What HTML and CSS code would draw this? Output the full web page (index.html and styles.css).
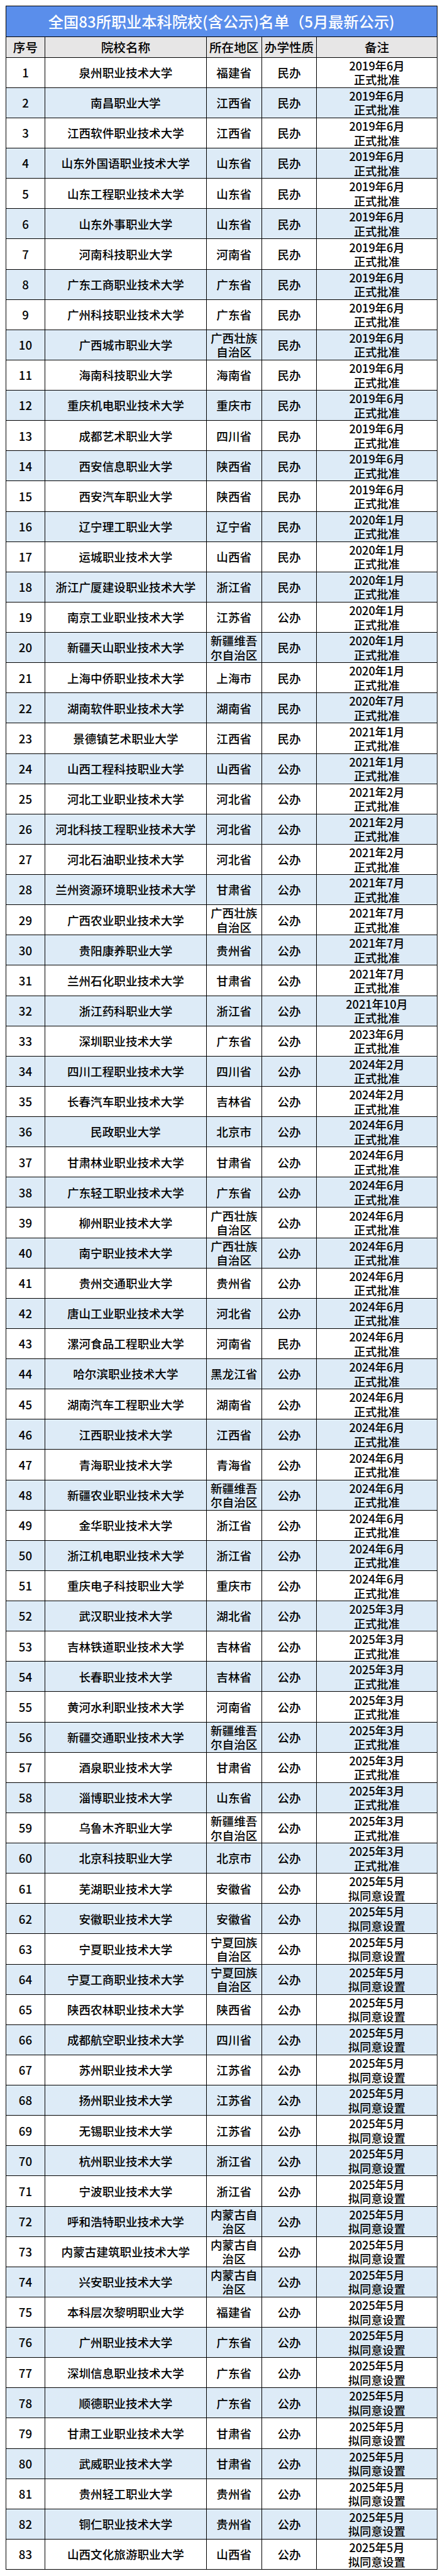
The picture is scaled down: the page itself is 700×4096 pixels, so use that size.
FILE: index.html
```html
<!DOCTYPE html>
<html lang="zh-CN">
<head>
<meta charset="utf-8">
<title>全国83所职业本科院校名单</title>
<link rel="stylesheet" href="styles.css">
</head>
<body>
<div class="page">
<table class="list">
<colgroup>
<col class="c-no"><col class="c-name"><col class="c-area"><col class="c-type"><col class="c-note">
</colgroup>
<thead>
<tr class="title-row"><th colspan="5" class="title">全国83所职业本科院校(含公示)名单（5月最新公示)</th></tr>
<tr class="head-row"><th>序号</th><th>院校名称</th><th>所在地区</th><th>办学性质</th><th>备注</th></tr>
</thead>
<tbody>
<tr><td>1</td><td>泉州职业技术大学</td><td>福建省</td><td>民办</td><td>2019年6月<br>正式批准</td></tr>
<tr><td>2</td><td>南昌职业大学</td><td>江西省</td><td>民办</td><td>2019年6月<br>正式批准</td></tr>
<tr><td>3</td><td>江西软件职业技术大学</td><td>江西省</td><td>民办</td><td>2019年6月<br>正式批准</td></tr>
<tr><td>4</td><td>山东外国语职业技术大学</td><td>山东省</td><td>民办</td><td>2019年6月<br>正式批准</td></tr>
<tr><td>5</td><td>山东工程职业技术大学</td><td>山东省</td><td>民办</td><td>2019年6月<br>正式批准</td></tr>
<tr><td>6</td><td>山东外事职业大学</td><td>山东省</td><td>民办</td><td>2019年6月<br>正式批准</td></tr>
<tr><td>7</td><td>河南科技职业大学</td><td>河南省</td><td>民办</td><td>2019年6月<br>正式批准</td></tr>
<tr><td>8</td><td>广东工商职业技术大学</td><td>广东省</td><td>民办</td><td>2019年6月<br>正式批准</td></tr>
<tr><td>9</td><td>广州科技职业技术大学</td><td>广东省</td><td>民办</td><td>2019年6月<br>正式批准</td></tr>
<tr><td>10</td><td>广西城市职业大学</td><td>广西壮族<br>自治区</td><td>民办</td><td>2019年6月<br>正式批准</td></tr>
<tr><td>11</td><td>海南科技职业大学</td><td>海南省</td><td>民办</td><td>2019年6月<br>正式批准</td></tr>
<tr><td>12</td><td>重庆机电职业技术大学</td><td>重庆市</td><td>民办</td><td>2019年6月<br>正式批准</td></tr>
<tr><td>13</td><td>成都艺术职业大学</td><td>四川省</td><td>民办</td><td>2019年6月<br>正式批准</td></tr>
<tr><td>14</td><td>西安信息职业大学</td><td>陕西省</td><td>民办</td><td>2019年6月<br>正式批准</td></tr>
<tr><td>15</td><td>西安汽车职业大学</td><td>陕西省</td><td>民办</td><td>2019年6月<br>正式批准</td></tr>
<tr><td>16</td><td>辽宁理工职业大学</td><td>辽宁省</td><td>民办</td><td>2020年1月<br>正式批准</td></tr>
<tr><td>17</td><td>运城职业技术大学</td><td>山西省</td><td>民办</td><td>2020年1月<br>正式批准</td></tr>
<tr><td>18</td><td>浙江广厦建设职业技术大学</td><td>浙江省</td><td>民办</td><td>2020年1月<br>正式批准</td></tr>
<tr><td>19</td><td>南京工业职业技术大学</td><td>江苏省</td><td>公办</td><td>2020年1月<br>正式批准</td></tr>
<tr><td>20</td><td>新疆天山职业技术大学</td><td>新疆维吾<br>尔自治区</td><td>民办</td><td>2020年1月<br>正式批准</td></tr>
<tr><td>21</td><td>上海中侨职业技术大学</td><td>上海市</td><td>民办</td><td>2020年1月<br>正式批准</td></tr>
<tr><td>22</td><td>湖南软件职业技术大学</td><td>湖南省</td><td>民办</td><td>2020年7月<br>正式批准</td></tr>
<tr><td>23</td><td>景德镇艺术职业大学</td><td>江西省</td><td>民办</td><td>2021年1月<br>正式批准</td></tr>
<tr><td>24</td><td>山西工程科技职业大学</td><td>山西省</td><td>公办</td><td>2021年1月<br>正式批准</td></tr>
<tr><td>25</td><td>河北工业职业技术大学</td><td>河北省</td><td>公办</td><td>2021年2月<br>正式批准</td></tr>
<tr><td>26</td><td>河北科技工程职业技术大学</td><td>河北省</td><td>公办</td><td>2021年2月<br>正式批准</td></tr>
<tr><td>27</td><td>河北石油职业技术大学</td><td>河北省</td><td>公办</td><td>2021年2月<br>正式批准</td></tr>
<tr><td>28</td><td>兰州资源环境职业技术大学</td><td>甘肃省</td><td>公办</td><td>2021年7月<br>正式批准</td></tr>
<tr><td>29</td><td>广西农业职业技术大学</td><td>广西壮族<br>自治区</td><td>公办</td><td>2021年7月<br>正式批准</td></tr>
<tr><td>30</td><td>贵阳康养职业大学</td><td>贵州省</td><td>公办</td><td>2021年7月<br>正式批准</td></tr>
<tr><td>31</td><td>兰州石化职业技术大学</td><td>甘肃省</td><td>公办</td><td>2021年7月<br>正式批准</td></tr>
<tr><td>32</td><td>浙江药科职业大学</td><td>浙江省</td><td>公办</td><td>2021年10月<br>正式批准</td></tr>
<tr><td>33</td><td>深圳职业技术大学</td><td>广东省</td><td>公办</td><td>2023年6月<br>正式批准</td></tr>
<tr><td>34</td><td>四川工程职业技术大学</td><td>四川省</td><td>公办</td><td>2024年2月<br>正式批准</td></tr>
<tr><td>35</td><td>长春汽车职业技术大学</td><td>吉林省</td><td>公办</td><td>2024年2月<br>正式批准</td></tr>
<tr><td>36</td><td>民政职业大学</td><td>北京市</td><td>公办</td><td>2024年6月<br>正式批准</td></tr>
<tr><td>37</td><td>甘肃林业职业技术大学</td><td>甘肃省</td><td>公办</td><td>2024年6月<br>正式批准</td></tr>
<tr><td>38</td><td>广东轻工职业技术大学</td><td>广东省</td><td>公办</td><td>2024年6月<br>正式批准</td></tr>
<tr><td>39</td><td>柳州职业技术大学</td><td>广西壮族<br>自治区</td><td>公办</td><td>2024年6月<br>正式批准</td></tr>
<tr><td>40</td><td>南宁职业技术大学</td><td>广西壮族<br>自治区</td><td>公办</td><td>2024年6月<br>正式批准</td></tr>
<tr><td>41</td><td>贵州交通职业大学</td><td>贵州省</td><td>公办</td><td>2024年6月<br>正式批准</td></tr>
<tr><td>42</td><td>唐山工业职业技术大学</td><td>河北省</td><td>公办</td><td>2024年6月<br>正式批准</td></tr>
<tr><td>43</td><td>漯河食品工程职业大学</td><td>河南省</td><td>民办</td><td>2024年6月<br>正式批准</td></tr>
<tr><td>44</td><td>哈尔滨职业技术大学</td><td>黑龙江省</td><td>公办</td><td>2024年6月<br>正式批准</td></tr>
<tr><td>45</td><td>湖南汽车工程职业大学</td><td>湖南省</td><td>公办</td><td>2024年6月<br>正式批准</td></tr>
<tr><td>46</td><td>江西职业技术大学</td><td>江西省</td><td>公办</td><td>2024年6月<br>正式批准</td></tr>
<tr><td>47</td><td>青海职业技术大学</td><td>青海省</td><td>公办</td><td>2024年6月<br>正式批准</td></tr>
<tr><td>48</td><td>新疆农业职业技术大学</td><td>新疆维吾<br>尔自治区</td><td>公办</td><td>2024年6月<br>正式批准</td></tr>
<tr><td>49</td><td>金华职业技术大学</td><td>浙江省</td><td>公办</td><td>2024年6月<br>正式批准</td></tr>
<tr><td>50</td><td>浙江机电职业技术大学</td><td>浙江省</td><td>公办</td><td>2024年6月<br>正式批准</td></tr>
<tr><td>51</td><td>重庆电子科技职业大学</td><td>重庆市</td><td>公办</td><td>2024年6月<br>正式批准</td></tr>
<tr><td>52</td><td>武汉职业技术大学</td><td>湖北省</td><td>公办</td><td>2025年3月<br>正式批准</td></tr>
<tr><td>53</td><td>吉林铁道职业技术大学</td><td>吉林省</td><td>公办</td><td>2025年3月<br>正式批准</td></tr>
<tr><td>54</td><td>长春职业技术大学</td><td>吉林省</td><td>公办</td><td>2025年3月<br>正式批准</td></tr>
<tr><td>55</td><td>黄河水利职业技术大学</td><td>河南省</td><td>公办</td><td>2025年3月<br>正式批准</td></tr>
<tr><td>56</td><td>新疆交通职业技术大学</td><td>新疆维吾<br>尔自治区</td><td>公办</td><td>2025年3月<br>正式批准</td></tr>
<tr><td>57</td><td>酒泉职业技术大学</td><td>甘肃省</td><td>公办</td><td>2025年3月<br>正式批准</td></tr>
<tr><td>58</td><td>淄博职业技术大学</td><td>山东省</td><td>公办</td><td>2025年3月<br>正式批准</td></tr>
<tr><td>59</td><td>乌鲁木齐职业大学</td><td>新疆维吾<br>尔自治区</td><td>公办</td><td>2025年3月<br>正式批准</td></tr>
<tr><td>60</td><td>北京科技职业大学</td><td>北京市</td><td>公办</td><td>2025年3月<br>正式批准</td></tr>
<tr><td>61</td><td>芜湖职业技术大学</td><td>安徽省</td><td>公办</td><td>2025年5月<br>拟同意设置</td></tr>
<tr><td>62</td><td>安徽职业技术大学</td><td>安徽省</td><td>公办</td><td>2025年5月<br>拟同意设置</td></tr>
<tr><td>63</td><td>宁夏职业技术大学</td><td>宁夏回族<br>自治区</td><td>公办</td><td>2025年5月<br>拟同意设置</td></tr>
<tr><td>64</td><td>宁夏工商职业技术大学</td><td>宁夏回族<br>自治区</td><td>公办</td><td>2025年5月<br>拟同意设置</td></tr>
<tr><td>65</td><td>陕西农林职业技术大学</td><td>陕西省</td><td>公办</td><td>2025年5月<br>拟同意设置</td></tr>
<tr><td>66</td><td>成都航空职业技术大学</td><td>四川省</td><td>公办</td><td>2025年5月<br>拟同意设置</td></tr>
<tr><td>67</td><td>苏州职业技术大学</td><td>江苏省</td><td>公办</td><td>2025年5月<br>拟同意设置</td></tr>
<tr><td>68</td><td>扬州职业技术大学</td><td>江苏省</td><td>公办</td><td>2025年5月<br>拟同意设置</td></tr>
<tr><td>69</td><td>无锡职业技术大学</td><td>江苏省</td><td>公办</td><td>2025年5月<br>拟同意设置</td></tr>
<tr><td>70</td><td>杭州职业技术大学</td><td>浙江省</td><td>公办</td><td>2025年5月<br>拟同意设置</td></tr>
<tr><td>71</td><td>宁波职业技术大学</td><td>浙江省</td><td>公办</td><td>2025年5月<br>拟同意设置</td></tr>
<tr><td>72</td><td>呼和浩特职业技术大学</td><td>内蒙古自<br>治区</td><td>公办</td><td>2025年5月<br>拟同意设置</td></tr>
<tr><td>73</td><td>内蒙古建筑职业技术大学</td><td>内蒙古自<br>治区</td><td>公办</td><td>2025年5月<br>拟同意设置</td></tr>
<tr><td>74</td><td>兴安职业技术大学</td><td>内蒙古自<br>治区</td><td>公办</td><td>2025年5月<br>拟同意设置</td></tr>
<tr><td>75</td><td>本科层次黎明职业大学</td><td>福建省</td><td>公办</td><td>2025年5月<br>拟同意设置</td></tr>
<tr><td>76</td><td>广州职业技术大学</td><td>广东省</td><td>公办</td><td>2025年5月<br>拟同意设置</td></tr>
<tr><td>77</td><td>深圳信息职业技术大学</td><td>广东省</td><td>公办</td><td>2025年5月<br>拟同意设置</td></tr>
<tr><td>78</td><td>顺德职业技术大学</td><td>广东省</td><td>公办</td><td>2025年5月<br>拟同意设置</td></tr>
<tr><td>79</td><td>甘肃工业职业技术大学</td><td>甘肃省</td><td>公办</td><td>2025年5月<br>拟同意设置</td></tr>
<tr><td>80</td><td>武威职业技术大学</td><td>甘肃省</td><td>公办</td><td>2025年5月<br>拟同意设置</td></tr>
<tr><td>81</td><td>贵州轻工职业大学</td><td>贵州省</td><td>公办</td><td>2025年5月<br>拟同意设置</td></tr>
<tr><td>82</td><td>铜仁职业技术大学</td><td>贵州省</td><td>公办</td><td>2025年5月<br>拟同意设置</td></tr>
<tr><td>83</td><td>山西文化旅游职业大学</td><td>山西省</td><td>公办</td><td>2025年5月<br>拟同意设置</td></tr>
</tbody>
</table>
</div>
</body>
</html>
```
FILE: styles.css
```css
html, body {
  margin: 0;
  padding: 0;
  background: #ffffff;
}

.page {
  padding: 8.75px 0 0 8.75px;
}

.list {
  width: 686px;
  table-layout: fixed;
  border-collapse: collapse;
  border: 1.5px solid #000;
  font-family: "Noto Sans CJK SC", "Noto Sans", sans-serif;
  color: #000;
}

.c-no { width: 62.4px; }
.c-name { width: 256.5px; }
.c-area { width: 88.1px; }
.c-type { width: 87.5px; }
.c-note { width: 191.5px; }

.list th,
.list td {
  border: 1px solid #000;
  padding: 0;
  text-align: center;
  vertical-align: middle;
  overflow: hidden;
  white-space: nowrap;
}

.title-row {
  height: 49.2px;
}

.title {
  background: #5a8eeb;
  color: #ffffff;
  font-size: 24.2px;
  font-weight: 500;
  line-height: 1.2;
}

.head-row {
  height: 32.8px;
}

.head-row th {
  background: #e7e6e6;
  font-size: 19.6px;
  font-weight: 500;
  line-height: 1.2;
}

.list tbody tr {
  height: 48.14px;
}

.list tbody td {
  font-size: 18.6px;
  font-weight: 500;
  line-height: 22.5px;
}

.list tbody td:last-child {
  font-size: 18.2px;
}

.list tbody tr:nth-child(even) td {
  background: #ddebf7;
}
```
